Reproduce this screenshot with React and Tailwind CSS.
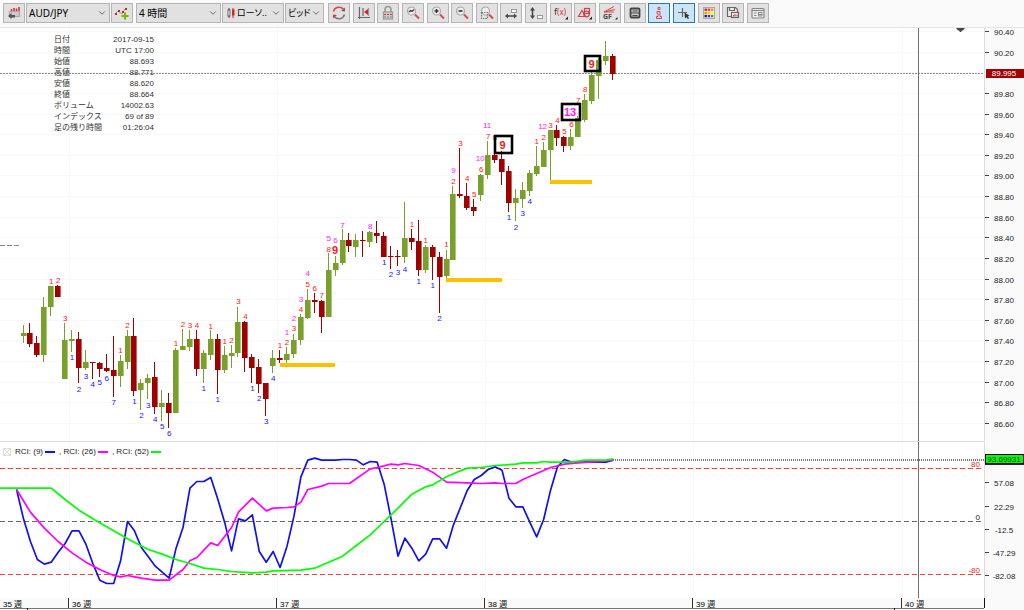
import React from "react";
import { ChevronDown } from "lucide-react";
import clsx from "clsx";

const STEP = 6.935;
const FIRST_X = 23.5;
const barX = (i) => FIRST_X + i * STEP;

const UP = "#7aa02c";
const DOWN = "#a00000";
const COLORS = { r: "#ff1414", b: "#1414ff", m: "#ff14ff" };
const WEEKS = [
  { x: 69, label: "36" },
  { x: 277, label: "37" },
  { x: 485, label: "38" },
  { x: 693, label: "39" },
  { x: 902, label: "40" },
];

// high, body top, body bottom, low, rising
const candles = [
  [297, 305, 308, 315, 1], [295, 305, 316, 319, 0], [308, 315, 327, 329, 0], [269, 279, 327, 334, 1],
  [258, 258, 279, 288, 1], [257, 258, 269, 269, 0], [295, 312, 351, 351, 1], [302, 311, 313, 324, 1],
  [304, 311, 340, 355, 0], [322, 334, 340, 342, 1], [334, 334, 335, 351, 0], [334, 335, 341, 349, 0],
  [326, 340, 343, 344, 0], [308, 342, 348, 369, 0], [327, 333, 348, 359, 1], [302, 308, 334, 341, 1],
  [290, 308, 363, 368, 0], [351, 355, 362, 382, 1], [346, 350, 355, 371, 1], [334, 349, 379, 386, 0],
  [362, 375, 379, 393, 1], [365, 375, 385, 400, 0], [320, 322, 385, 385, 1], [301, 318, 322, 322, 1],
  [302, 311, 319, 323, 1], [302, 311, 341, 348, 0], [322, 325, 341, 355, 1], [302, 311, 327, 332, 1],
  [306, 311, 342, 366, 0], [318, 327, 342, 345, 1], [317, 325, 328, 340, 1], [279, 294, 325, 329, 1],
  [293, 294, 330, 344, 0], [326, 329, 340, 355, 0], [331, 339, 356, 365, 0], [355, 355, 371, 388, 0],
  [322, 330, 338, 345, 1], [322, 330, 332, 335, 0], [319, 326, 332, 336, 1], [306, 312, 326, 330, 1],
  [286, 289, 312, 317, 1], [261, 272, 290, 291, 1], [265, 272, 274, 285, 0], [272, 273, 289, 305, 0],
  [225, 242, 289, 289, 1], [228, 235, 242, 248, 1], [201, 212, 235, 237, 1], [205, 212, 218, 224, 0],
  [206, 212, 219, 229, 1], [203, 212, 213, 229, 0], [203, 204, 214, 219, 1], [193, 205, 208, 215, 0],
  [204, 208, 229, 229, 0], [218, 228, 229, 241, 0], [222, 228, 229, 238, 0], [174, 210, 229, 235, 1],
  [201, 210, 214, 222, 0], [192, 213, 242, 248, 0], [217, 219, 242, 245, 1], [217, 219, 229, 252, 0],
  [224, 229, 249, 285, 0], [222, 231, 248, 250, 1], [158, 166, 232, 232, 1], [120, 166, 168, 170, 0],
  [155, 168, 180, 182, 0], [171, 179, 183, 188, 0], [146, 147, 167, 173, 1], [113, 127, 147, 151, 1],
  [125, 127, 132, 135, 0], [123, 131, 144, 157, 0], [138, 143, 175, 184, 0], [161, 170, 175, 193, 1],
  [154, 162, 171, 180, 1], [142, 145, 163, 168, 1], [118, 138, 146, 148, 1], [114, 122, 139, 139, 1],
  [102, 102, 122, 152, 1], [97, 102, 110, 118, 0], [108, 109, 118, 124, 0], [101, 109, 118, 122, 1],
  [88, 90, 109, 109, 1], [66, 72, 92, 94, 1], [43, 47, 73, 76, 1], [30, 32, 48, 71, 1],
  [13, 28, 33, 37, 1], [26, 28, 46, 52, 0],
];

// bar index, count, colour, vertical centre
const counts = [
  [4, "1", "r", 253], [5, "2", "r", 252], [6, "3", "r", 290], [7, "1", "b", 329], [8, "2", "b", 361],
  [9, "3", "b", 348], [10, "4", "b", 356], [11, "5", "b", 354], [12, "6", "b", 350], [13, "7", "b", 374],
  [14, "1", "r", 322], [15, "2", "r", 297], [16, "1", "b", 373], [17, "2", "b", 387], [18, "3", "b", 377],
  [19, "4", "b", 391], [20, "5", "b", 398], [21, "6", "b", 405], [22, "1", "r", 315], [23, "2", "r", 296],
  [24, "3", "r", 297], [25, "4", "r", 297], [26, "1", "b", 360], [27, "1", "r", 298], [28, "1", "b", 371],
  [29, "1", "r", 313], [30, "2", "r", 312], [31, "3", "r", 273], [32, "4", "r", 288], [33, "1", "b", 360],
  [34, "2", "b", 370], [35, "3", "b", 393], [36, "4", "b", 350], [37, "1", "r", 317], [38, "2", "r", 314],
  [38, "1", "m", 304], [39, "3", "r", 300], [39, "2", "m", 290], [40, "4", "r", 281], [40, "3", "m", 271],
  [41, "5", "r", 256], [41, "4", "m", 245], [42, "6", "r", 260], [43, "7", "r", 267], [44, "8", "r", 221],
  [44, "5", "m", 210], [45, "6", "m", 212], [46, "7", "m", 197], [50, "8", "m", 198], [52, "1", "b", 234],
  [53, "2", "b", 246], [54, "3", "b", 244], [55, "4", "b", 241], [56, "1", "r", 196], [57, "1", "b", 253],
  [58, "1", "r", 212], [59, "1", "b", 257], [60, "2", "b", 290], [61, "1", "r", 216], [62, "2", "r", 153],
  [62, "9", "m", 142], [63, "3", "r", 115], [64, "4", "r", 150], [65, "5", "r", 166], [66, "6", "r", 141],
  [66, "10", "m", 130], [67, "7", "r", 108], [67, "11", "m", 97], [68, "8", "r", 109], [70, "1", "b", 189],
  [71, "2", "b", 199], [72, "3", "b", 185], [73, "4", "b", 173], [74, "1", "r", 113], [75, "2", "r", 109],
  [75, "12", "m", 98], [76, "3", "r", 97], [77, "4", "r", 92], [78, "5", "r", 103], [79, "6", "r", 96],
  [80, "7", "r", 72], [81, "8", "r", 61],
];

const supports = [
  { x: 280, y: 335, w: 55 },
  { x: 446, y: 250, w: 56 },
  { x: 550, y: 152, w: 42 },
];

const signals = [
  { x: 495, y: 108, w: 17, h: 17, text: "9", color: COLORS.r },
  { x: 562, y: 76, w: 18, h: 16, text: "13", color: COLORS.m },
  { x: 585, y: 28, w: 15, h: 15, text: "9", color: COLORS.r },
];

const rciFast = [
  48, 4, -30, -57, -64, -61, -46, -33, -14, -14, -34, -63, -88, -93, -93, -59, 0, -14, -39, -53,
  -67, -76, -85, -40, -9, 50, 60, 60, 66, 34, -1, -44, 4, 1, 10, -45, -61, -45, -69, -37,
  8, 67, 92, 95, 92, 92, 92, 93, 93, 92, 85, 90, 89, 56, 4, -52, -25, -40, -59, -49,
  -26, -26, -40, -5, 21, 47, 63, 69, 78, 82, 77, 35, 22, 22, -1, -23, 3, 47, 82, 93,
  89, 89, 89, 89, 89, 89, 92,
].map((v, i) => [i - 1, v]);

const rciMid = [
  [-1, 48], [1, 14], [3, -10], [5, -30], [7, -47], [9, -61], [11, -72], [13, -81], [14, -83], [15, -81],
  [16, -83], [17, -85], [19, -88], [21, -88], [23, -72], [24, -59], [25, -54], [27, -32], [28, -36], [30, -9],
  [31, 14], [33, 35], [35, 16], [36, 20], [38, 21], [39, 22], [40, 29], [41, 48], [43, 53], [44, 57],
  [47, 57], [50, 79], [51, 81], [53, 86], [54, 85], [55, 87], [57, 84], [59, 74], [61, 59], [64, 58],
  [66, 57], [68, 58], [69, 57], [71, 57], [72, 63], [74, 72], [76, 81], [78, 86], [80, 88], [83, 90], [85, 92],
];

const rciSlow = [
  [-4, 50], [4, 50], [6, 33], [8, 17], [10, 4], [13, -14], [15, -26], [18, -42], [20, -49], [22, -57],
  [24, -63], [26, -70], [28, -72], [30, -75], [33, -77], [35, -76], [36, -74], [40, -73], [42, -70], [44, -61],
  [46, -52], [48, -36], [50, -20], [52, 0], [54, 20], [56, 41], [58, 52], [59, 55], [61, 67], [63, 76],
  [64, 80], [66, 81], [68, 84], [71, 86], [72, 88], [74, 88], [75, 90], [76, 89], [79, 89], [81, 92], [84, 92], [85, 94],
];

const rciY = (v) => 79.5 - (v * 2) / 3;
const toPoints = (series) => series.map(([i, v]) => `${barX(i)},${rciY(v)}`).join(" ");

const priceTicks = Array.from({ length: 20 }, (_, i) => ({
  label: (90.4 - i * 0.2).toFixed(2),
  y: Math.round(3 + i * 20.63) + 0.5,
}));
// the last price tag takes the place of this tick
const axisTicks = priceTicks.filter((tick) => tick.label !== "90.00");

const rciTicks = ["57.08", "22.29", "-12.5", "-47.29", "-82.08"];

const info = [
  ["日付", "2017-09-15"],
  ["時間", "UTC 17:00"],
  ["始値", "88.693"],
  ["高値", "88.771"],
  ["安値", "88.620"],
  ["終値", "88.664"],
  ["ボリューム", "14002.63"],
  ["インデックス", "69 of 89"],
  ["足の残り時間", "01:26:04"],
];

function Icon({ children }) {
  return (
    <svg viewBox="0 0 16 16" className="w-4 h-4" fill="none" stroke="#666" strokeWidth="1.2">
      {children}
    </svg>
  );
}

function Lens({ children }) {
  return (
    <Icon>
      <path d="M10 9.5 14 13.500" stroke="#d84a4a" strokeWidth="2" />
      <circle cx="6.500" cy="6" r="4" fill="#eee" stroke="#aaa" />
      {children}
    </Icon>
  );
}

const tools = [
  {
    name: "Refresh",
    icon: (
      <Icon>
        <path d="M2.500 6.500a5.800 5.800 0 0 1 10-2.300" stroke="#d44" strokeWidth="1.500" />
        <path d="M13.500 9.500a5.800 5.800 0 0 1-10 2.300" stroke="#777" strokeWidth="1.500" />
        <path d="M14 6.500V2.500l-4 3.500z" fill="#666" stroke="none" />
        <path d="M2 9.500v4l4-3.500z" fill="#d33" stroke="none" />
      </Icon>
    ),
  },
  {
    name: "Shift chart",
    icon: (
      <Icon>
        <path d="M3.500 2v12M2 12.500h12M7 3v8" />
        <path d="M12.500 3v8" stroke="#999" />
        <path d="M12 4v6L8 7z" fill="#e02020" stroke="none" />
      </Icon>
    ),
  },
  {
    name: "Lock",
    icon: (
      <Icon>
        <path d="M5 7V4.500a3 3 0 0 1 6 0V7" stroke="#999" strokeWidth="1.600" />
        <rect x="3.500" y="7" width="9" height="7" fill="#ccc" stroke="#999" />
        <path d="M4 9.500h8" stroke="#d33" strokeDasharray="2 1" />
        <path d="M4 12h8" stroke="#888" strokeDasharray="2 1" />
      </Icon>
    ),
  },
  {
    name: "Auto zoom",
    icon: (
      <Lens>
        <path d="m4 7 1.500-1.500L7 6.500l2-2" stroke="#333" />
      </Lens>
    ),
  },
  {
    name: "Zoom in",
    icon: (
      <Lens>
        <path d="M6.500 4v4M4.500 6h4" stroke="#333" strokeWidth="1.600" />
      </Lens>
    ),
  },
  {
    name: "Zoom out",
    icon: (
      <Lens>
        <path d="M4.500 6h4" stroke="#333" strokeWidth="1.600" />
      </Lens>
    ),
  },
  {
    name: "Zoom area",
    icon: (
      <Lens>
        <rect x="2.500" y="7.500" width="6" height="6" stroke="#777" strokeDasharray="1.500 1" />
      </Lens>
    ),
  },
  {
    name: "Horizontal scale",
    icon: (
      <Icon>
        <path d="M4 11h8" stroke="#444" strokeWidth="1.500" />
        <path d="M5 8.500v5l-3-2.500zM11 8.500v5l3-2.500z" fill="#444" stroke="none" />
        <rect x="8.500" y="4.500" width="5" height="3" fill="#fff" stroke="#999" strokeWidth="1" />
      </Icon>
    ),
  },
  {
    name: "Vertical scale",
    icon: (
      <Icon>
        <path d="M4.500 4v8" stroke="#444" strokeWidth="1.500" />
        <path d="M2 5.500h5L4.500 2zM2 10.500h5L4.500 14z" fill="#444" stroke="none" />
        <rect x="9.500" y="10.500" width="5" height="3" fill="#fff" stroke="#999" strokeWidth="1" />
      </Icon>
    ),
  },
  {
    name: "Indicators",
    icon: (
      <Icon>
        <text x="1" y="10" fontSize="9" fill="#333" stroke="none">f</text>
        <text x="4" y="10" fontSize="8" fill="#d33" stroke="none">(x)</text>
        <path d="M15 11.500v3h-3z" fill="#222" stroke="none" />
      </Icon>
    ),
  },
  {
    name: "Shapes",
    icon: (
      <Icon>
        <path d="M1.500 11.500 5 5.500l3.500 6z" stroke="#c44" />
        <rect x="7.500" y="3.500" width="5" height="5" stroke="#c44" />
        <circle cx="9.500" cy="9" r="2.800" stroke="#c44" />
        <path d="M15 11.500v3h-3z" fill="#222" stroke="none" />
      </Icon>
    ),
  },
  {
    name: "Gann and Fibonacci",
    icon: (
      <Icon>
        <path d="M2 7 12 1.500M2 7l11-2.500M2 7h10" stroke="#d44" strokeWidth="1" />
        <text x="1" y="14" fontSize="7" fontWeight="700" fill="#444" stroke="none">GF</text>
        <path d="M15.500 12v2.500H13z" fill="#222" stroke="none" />
      </Icon>
    ),
  },
  {
    name: "Panel",
    icon: (
      <Icon>
        <rect x="3.500" y="3.500" width="9" height="9" rx="1" fill="#ccc" stroke="#444" strokeWidth="1.800" />
        <path d="M3.500 8h9M5.500 6h5M5.500 10.500h5" stroke="#444" strokeWidth="1.200" />
      </Icon>
    ),
  },
  {
    name: "Information",
    active: true,
    icon: (
      <Icon>
        <path d="M7 2.500h2v2H7zM6 6.500h3v5h1.500v2h-5v-2H7v-3H6z" stroke="#d24a5a" strokeWidth="1" fill="#f4d4dc" />
      </Icon>
    ),
  },
  {
    name: "Crosshair",
    active: true,
    icon: (
      <Icon>
        <path d="M6.500 3v9M2 7.500h9" stroke="#666" strokeWidth="1.200" />
        <path d="m8.500 7.500.5 6 1.500-1.500 1.300 2 1.200-.8-1.200-2 1.700-.5z" fill="#333" stroke="none" />
      </Icon>
    ),
  },
  {
    name: "Colours",
    icon: (
      <Icon>
        <rect x="2.500" y="2.500" width="11" height="11" fill="#eee" stroke="#aaa" strokeWidth="1" />
        {["#c22", "#f33", "#f80", "#d90", "#fc0", "#ff0", "#222", "#80f", "#2a2"].map((c, i) => (
          <rect key={c} x={3.5 + (i % 3) * 3.2} y={3.5 + Math.floor(i / 3) * 3.2} width="2.400" height="2.400" fill={c} stroke="none" />
        ))}
      </Icon>
    ),
  },
  {
    name: "Save",
    icon: (
      <Icon>
        <path d="M2.500 2.500h8l2 2v7h-10z" fill="#eee" />
        <path d="M4.500 2.500v3h5v-3" />
        <rect x="6.500" y="7.500" width="7" height="5" fill="#fff" />
        <path d="M8.500 11.500V10m1.500 1.500V9m2 2.500v-2" stroke="#d33" />
      </Icon>
    ),
  },
  {
    name: "Templates",
    icon: (
      <Icon>
        <rect x="2" y="3.500" width="12" height="9.500" rx="1" fill="#eee" stroke="#888" />
        <path d="M2 5.500h12" stroke="#888" />
        <path d="M4 8h2.500M4 10.500h2.500M8.500 7.500h3.500v3.500H8.500zM8.500 9.500H12" stroke="#888" strokeWidth="1" />
      </Icon>
    ),
  },
];

function ToolButton({ name, active, children }) {
  return (
    <button
      aria-label={name}
      className={clsx(
        "w-[22px] h-5 shrink-0 border flex items-center justify-center",
        active ? "bg-[#cce4f7] border-[#2878b8]" : "bg-[#e1e1e1] border-[#b4b4b8]"
      )}
    >
      {children}
    </button>
  );
}

function Dropdown({ label, value, width, icon, size = "text-[10px]" }) {
  return (
    <div className={clsx("relative h-5 shrink-0 bg-[#e1e1e1] border border-[#b4b4b8] flex items-center", width)}>
      {icon && <span className="pl-1">{icon}</span>}
      <select
        aria-label={label}
        defaultValue={value}
        className={clsx(
          "appearance-none bg-transparent flex-1 min-w-0 h-full pl-[2px] text-black [font-feature-settings:'palt'] outline-none",
          size
        )}
      >
        <option>{value}</option>
      </select>
      <ChevronDown className="absolute right-0.5 w-[10px] h-[10px] text-gray-600 pointer-events-none" strokeWidth={2} />
    </div>
  );
}

function Toolbar() {
  return (
    <header className="h-7 shrink-0 bg-[#fafafa] border-b border-[#e4e4e4] pl-[3px] pt-[3px] flex items-start gap-px font-['Noto_Sans','Noto_Sans_CJK_JP',sans-serif]">
      <ToolButton name="Load chart">
        <Icon>
          <rect x="3.500" y="6.500" width="10" height="5" fill="#ccc" stroke="#aaa" />
          <path d="M5.500 6V4m2.500 2V3m2.500 3V3.500M13 6V2" stroke="#d33" strokeWidth="1.600" />
          <path d="M2 11l3.500-3v2H9v2.500H5.500V14z" fill="#555" stroke="none" />
        </Icon>
      </ToolButton>
      <Dropdown label="Instrument" value="AUD/JPY" width="w-[84px]" />
      <ToolButton name="Add instrument">
        <Icon>
          <path d="m1 9 3-3 4 3 3-5" stroke="#999" strokeWidth="1" />
          <path d="M1 8h2v2H1zM4 5h2v2H4zM8 6h2v2H8zM11 3h2v2h-2z" fill="#c22" stroke="none" />
          <path d="M11 7.500v7M7.500 11h7" stroke="#7ab800" strokeWidth="2" />
        </Icon>
      </ToolButton>
      <span className="w-px" />
      <Dropdown label="Period" value="4 時間" width="w-[85px]" />
      <Dropdown
        label="Chart type"
        value="ローソ.."
        width="w-[62px]"
        size="text-[9px]"
        icon={
          <svg viewBox="0 0 8 12" className="w-2 h-3" stroke="#444">
            <path d="M2 1v10" />
            <rect x="1" y="3" width="2" height="6" fill="#fff" strokeWidth=".8" />
            <path d="M6 1v10" stroke="#c22" />
            <rect x="5" y="2.500" width="2.500" height="6" fill="#d22" stroke="none" />
          </svg>
        }
      />
      <Dropdown label="Offer side" value="ビッド" width="w-[39px]" size="text-[9px]" />
      <div className="w-[444px] pl-[3px] shrink-0 flex justify-between">
        {tools.map((tool) => (
          <ToolButton key={tool.name} name={tool.name} active={tool.active}>
            {tool.icon}
          </ToolButton>
        ))}
      </div>
    </header>
  );
}

function WeekLines() {
  return (
    <g stroke="#f8f8f8" shapeRendering="crispEdges">
      {WEEKS.map((week) => (
        <line key={week.x} x1={week.x} x2={week.x} y1="0" y2="100%" />
      ))}
    </g>
  );
}

function PriceChart() {
  return (
    <svg className="block w-full h-full absolute inset-0" textAnchor="middle" fontSize="8">
      <g stroke="#f8f8f8" shapeRendering="crispEdges">
        {priceTicks.map((tick) => (
          <line key={tick.label} x1="0" x2="100%" y1={tick.y} y2={tick.y} />
        ))}
      </g>
      <WeekLines />
      <line x1="0" x2="20" y1="217.500" y2="217.500" stroke="#888" strokeDasharray="5 2" />
      <line x1="0" x2="100%" y1="45.500" y2="45.500" stroke="#909090" strokeDasharray="2 1" />
      {candles.map(([high, top, bottom, low, up], i) => {
        const x = Math.round(barX(i));
        return (
          <g key={i} fill={up ? UP : DOWN}>
            <rect x={x - 1} y={high} width="1" height={low - high} />
            <rect x={x - 3} y={top} width="5.600" height={bottom - top} />
          </g>
        );
      })}
      {supports.map((s) => (
        <rect key={s.x} x={s.x} y={s.y} width={s.w} height="4" fill="#ffc000" />
      ))}
      {counts.map(([i, text, color, y]) => (
        <text key={`${i}-${color}`} x={barX(i) - (text.length > 1 ? 1 : 0)} y={y + 3} fill={COLORS[color]}>
          {text}
        </text>
      ))}
      <text x="335" y="226" fontSize="11" fontWeight="700" fill={COLORS.r}>9</text>
      {signals.map((s) => (
        <g key={s.x}>
          <rect x={s.x} y={s.y} width={s.w} height={s.h} fill="none" stroke="#000" strokeWidth="2.600" />
          <text x={s.x + s.w / 2 - 1} y={s.y + s.h / 2 + 4} fontSize="11" fontWeight="700" fill={s.color}>
            {s.text}
          </text>
        </g>
      ))}
      <line x1="918.500" x2="918.500" y1="0" y2="100%" stroke="#707070" />
      <path d="M956 0h9l-2 2.500h-1l-1 1.500h-1l-1-1.500h-1z" fill="#444" />
    </svg>
  );
}

function PriceAxis() {
  return (
    <svg className="block w-10 h-full shrink-0 bg-[#fafafa] border-l border-[#dcdcdc]" textAnchor="middle" fontSize="8">
      {axisTicks.map((tick) => (
        <g key={tick.label}>
          <path d={`M0 ${tick.y}h4`} stroke="#444" />
          <text x="19" y={tick.y + 3} fill="#222">{tick.label}</text>
        </g>
      ))}
      <rect x="1" y="41" width="38" height="9" fill="#a00000" />
      <text x="19" y="48" fill="#fff">89.995</text>
    </svg>
  );
}

function InfoTable() {
  return (
    <table className="absolute left-[54px] top-[6px] w-[100px] text-[8px] leading-[11px] text-[#333]">
      <tbody>
        {info.map(([label, value]) => (
          <tr key={label}>
            <th className="p-0 font-normal text-left whitespace-nowrap">{label}</th>
            <td className="p-0 text-right whitespace-nowrap">{value}</td>
          </tr>
        ))}
      </tbody>
    </table>
  );
}

function RciLegend() {
  return (
    <div className="absolute left-[3px] top-[5px] flex items-center gap-1 text-[8px] leading-[10px] text-[#222]">
      <button aria-label="Remove RCI" className="w-2 h-2 border border-[#ddd] flex items-center justify-center">
        <svg viewBox="0 0 6 6" className="w-1.5 h-1.5" stroke="#ddd">
          <path d="m0 0 6 6M6 0 0 6" />
        </svg>
      </button>
      <span className="flex items-center gap-0.5">RCI: (9) <i className="w-[10px] h-0.5 bg-[#1010f0]" /></span>
      <span className="flex items-center gap-0.5">, RCI: (26) <i className="w-[10px] h-0.5 bg-[#ff00ff]" /></span>
      <span className="flex items-center gap-0.5">, RCI: (52) <i className="w-[10px] h-0.5 bg-[#00ff00]" /></span>
    </div>
  );
}

function RciChart() {
  return (
    <svg className="block w-full h-full absolute inset-0" textAnchor="end" fontSize="8">
      <WeekLines />
      <g strokeDasharray="5 3" shapeRendering="crispEdges">
        <line x1="0" x2="100%" y1="26.500" y2="26.500" stroke="#ff4040" />
        <line x1="0" x2="100%" y1="79.500" y2="79.500" stroke="#666" />
        <line x1="0" x2="100%" y1="132.500" y2="132.500" stroke="#ff4040" />
      </g>
      <line x1="613" x2="100%" y1="18" y2="18" stroke="#777" strokeWidth="2" strokeDasharray="1 1" shapeRendering="crispEdges" />
      <g fill="none" strokeWidth="1.700" strokeLinejoin="round">
        <polyline points={toPoints(rciFast)} stroke="#1010f0" />
        <polyline points={toPoints(rciMid)} stroke="#ff00ff" />
        <polyline points={toPoints(rciSlow)} stroke="#00ff00" />
      </g>
      <text x="100%" dx="-4" y="25" fill="#ff2020">80</text>
      <text x="100%" dx="-4" y="78" fill="#222">0</text>
      <text x="100%" dx="-4" y="131" fill="#ff2020">-80</text>
      <line x1="918.500" x2="918.500" y1="0" y2="100%" stroke="#707070" />
    </svg>
  );
}

function RciAxis() {
  return (
    <svg
      className="block w-10 h-full shrink-0 bg-[#fafafa] border-l border-l-[#dcdcdc] border-t border-t-[#fafafa]"
      textAnchor="middle"
      fontSize="8"
    >
      {rciTicks.map((label) => {
        const y = Math.round(rciY(Number(label))) - 0.5;
        return (
          <g key={label}>
            <path d={`M0 ${y}h4`} stroke="#444" />
            <text x="19" y={y + 3} fill="#222">{label}</text>
          </g>
        );
      })}
      <rect x="0" y="13" width="39" height="10" fill="#600070" />
      <rect x="0.500" y="12.500" width="38" height="9" fill="#00ff00" stroke="#000" />
      <text x="19" y="20" fill="#003000">93.69931</text>
    </svg>
  );
}

function TimeAxis() {
  return (
    <svg className="block w-full h-3 shrink-0 bg-[#fafafa]" fontSize="8" fill="#000" shapeRendering="crispEdges">
      <text x="3" y="9">35 週</text>
      {WEEKS.map((week) => (
        <g key={week.x}>
          <rect x={week.x - 1} y="0" width="1" height="10" fill="#333" />
          <text x={week.x + 3} y="9">{week.label} 週</text>
        </g>
      ))}
      <path d="M0 10h984" stroke="#777" />
      <path d="M984 0v10M27 10v2M894 10v2" stroke="#111" />
    </svg>
  );
}

export default function App() {
  return (
    <div className="h-screen flex flex-col overflow-hidden bg-white font-['Liberation_Sans','Noto_Sans_CJK_JP',sans-serif]">
      <Toolbar />
      <section className="flex-1 min-h-0 flex">
        <div className="relative flex-1 min-w-0">
          <PriceChart />
          <InfoTable />
        </div>
        <PriceAxis />
      </section>
      <section className="h-[157px] shrink-0 flex">
        <div className="relative flex-1 min-w-0 border-t border-[#dcdcdc]">
          <RciChart />
          <RciLegend />
        </div>
        <RciAxis />
      </section>
      <TimeAxis />
    </div>
  );
}
